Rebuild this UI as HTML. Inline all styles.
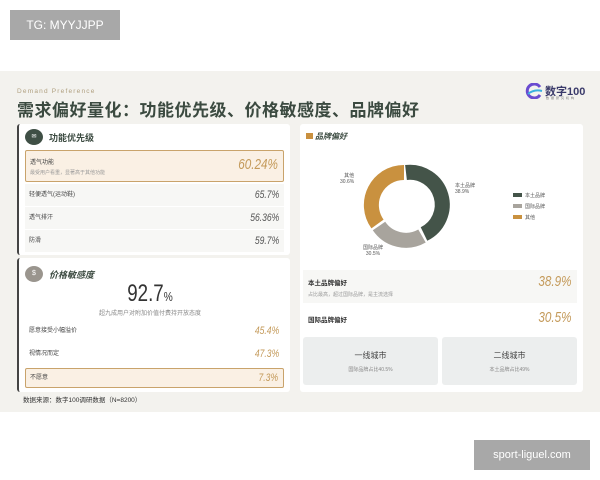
<!DOCTYPE html>
<html><head><meta charset="utf-8"><style>
*{margin:0;padding:0;box-sizing:border-box}
body{width:600px;height:480px;background:#fff;position:relative;overflow:hidden;font-family:"Liberation Sans","Noto Sans CJK SC",sans-serif;color:#333}
.a{position:absolute}
.bg{left:0;top:71px;width:600px;height:341px;background:#f3f2ee}
.card{background:#fff;border-radius:3px}
.row{position:absolute;left:25px;width:259px;height:22px;background:#f7f7f5;font-size:6px;color:#444;padding-left:4px;line-height:22px}
.row b{position:absolute;right:5px;top:0;font-weight:normal;font-style:italic;font-size:11px;color:#555;transform:scaleX(0.78);transform-origin:right center}
.gold{color:#c49a5a!important}
.hl{background:#faf0e4;border:1px solid #c9a36b;border-radius:2px}
.city{position:absolute;top:337px;width:135px;height:48px;background:#eceeee;border-radius:3px;text-align:center}
.num{transform:scaleX(0.78);transform-origin:right center}
</style></head><body>
<div class="a" style="left:10px;top:10px;width:110px;height:30px;background:#a8a8a8;color:#fff;font-size:12px;line-height:30px;text-align:center">TG: MYYJJPP</div>
<div class="a bg"></div>
<div class="a" style="left:17px;top:88px;font-size:6.5px;letter-spacing:1.2px;color:#b0a080">Demand Preference</div>
<div class="a" style="left:17px;top:96px;font-size:17px;font-weight:bold;color:#3b4a40;letter-spacing:0.5px">需求偏好量化：功能优先级、价格敏感度、品牌偏好</div>
<svg class="a" style="left:525px;top:83px" width="18" height="16"><path d="M15 4 A7 7 0 1 0 15 12" stroke="#6a4bd0" stroke-width="3" fill="none"/><path d="M3 11 Q9 6 17 8" stroke="#39b0e0" stroke-width="2" fill="none"/></svg>
<div class="a" style="left:545px;top:83px;font-size:11px;font-weight:bold;color:#3a3a6a">数字100</div>
<div class="a" style="left:546px;top:96px;font-size:3px;color:#777;letter-spacing:2px">数据研究机构</div>

<div class="a card" style="left:17px;top:124px;width:273px;height:131px;border-left:2px solid #444"></div>
<div class="a" style="left:25px;top:129px;width:18px;height:16px;border-radius:50%;background:#3f4f45;color:#fff;font-size:6px;text-align:center;line-height:16px">✉</div>
<div class="a" style="left:49px;top:131px;font-size:9px;font-weight:bold;color:#3b4a40">功能优先级</div>
<div class="row hl" style="top:150px;height:32px;line-height:normal;padding-top:6px">透气功能<div style="font-size:5px;color:#999;margin-top:3px">最受用户看重，显著高于其他功能</div><b class="gold" style="font-size:15px;top:5px">60.24%</b></div>
<div class="row" style="top:184px">轻便透气(运动鞋)<b>65.7%</b></div>
<div class="row" style="top:207px">透气排汗<b>56.36%</b></div>
<div class="row" style="top:230px">防滑<b>59.7%</b></div>

<div class="a card" style="left:17px;top:258px;width:273px;height:134px;border-left:2px solid #444"></div>
<div class="a" style="left:25px;top:266px;width:18px;height:16px;border-radius:50%;background:#9a958e;color:#fff;font-size:7px;text-align:center;line-height:16px">$</div>
<div class="a" style="left:49px;top:268px;font-size:9px;font-weight:bold;font-style:italic;color:#3b4a40">价格敏感度</div>
<div class="a" style="left:100px;top:280px;width:100px;text-align:center;font-size:24px;color:#333;transform:scaleX(0.78)">92.7<span style="font-size:13px">%</span></div>
<div class="a" style="left:50px;top:308px;width:200px;text-align:center;font-size:6px;color:#888">超九成用户对附加价值付费持开放态度</div>
<div class="row" style="top:320px;background:#fff">愿意接受小幅溢价<b class="gold">45.4%</b></div>
<div class="row" style="top:343px;background:#fff">视情况而定<b class="gold">47.3%</b></div>
<div class="row hl" style="top:368px;height:20px;line-height:18px">不愿意<b class="gold" style="line-height:18px">7.3%</b></div>
<div class="a" style="left:23px;top:394px;font-size:6.5px;color:#333">数据来源：数字100调研数据（N=8200）</div>

<div class="a card" style="left:300px;top:124px;width:283px;height:268px"></div>
<div class="a" style="left:306px;top:133px;width:7px;height:6px;background:#c9903f"></div>
<div class="a" style="left:315px;top:131px;font-size:8px;font-weight:bold;font-style:italic;color:#3b4a40">品牌偏好</div>
<svg class="a" style="left:355px;top:155px" width="110" height="110">
<g fill="none" stroke-width="15">
<path d="M51 17.5 A32.5 32.5 0 0 1 69 79" stroke="#445449"/>
<path d="M67 81 A32.5 32.5 0 0 1 24 71" stroke="#a8a49d"/>
<path d="M22.5 69 A32.5 32.5 0 0 1 49 17.5" stroke="#c9913f"/>
</g></svg>
<div class="a" style="left:455px;top:183px;font-size:5px;color:#555;line-height:6px">本土品牌<br>38.9%</div>
<div class="a" style="left:340px;top:173px;font-size:5px;color:#555;line-height:6px;text-align:right">其他<br>30.6%</div>
<div class="a" style="left:363px;top:245px;font-size:5px;color:#555;line-height:6px;text-align:center">国际品牌<br>30.5%</div>
<div class="a" style="left:513px;top:191px;font-size:5px;color:#555;line-height:11px">
<div><span style="display:inline-block;width:9px;height:4px;background:#445449;margin-right:3px"></span>本土品牌</div>
<div><span style="display:inline-block;width:9px;height:4px;background:#a8a49d;margin-right:3px"></span>国际品牌</div>
<div><span style="display:inline-block;width:9px;height:4px;background:#c9913f;margin-right:3px"></span>其他</div></div>
<div class="a" style="left:303px;top:270px;width:274px;height:33px;background:#f7f7f5;padding:7px 5px"><div style="font-size:6.5px;font-weight:bold;color:#333">本土品牌偏好</div><div style="font-size:5px;color:#999;margin-top:4px">占比最高，超过国际品牌，是主流选择</div><div class="a gold num" style="right:5px;top:3px;font-size:15px;font-style:italic">38.9%</div></div>
<div class="a" style="left:303px;top:304px;width:274px;height:30px;background:#fff;padding:10px 5px"><div style="font-size:6.5px;font-weight:bold;color:#333">国际品牌偏好</div><div class="a gold num" style="right:5px;top:5px;font-size:15px;font-style:italic">30.5%</div></div>
<div class="city" style="left:303px"><div style="font-size:8px;color:#444;margin-top:13px">一线城市</div><div style="font-size:5px;color:#888;margin-top:5px">国际品牌占比40.5%</div></div>
<div class="city" style="left:442px"><div style="font-size:8px;color:#444;margin-top:13px">二线城市</div><div style="font-size:5px;color:#888;margin-top:5px">本土品牌占比49%</div></div>

<div class="a" style="left:474px;top:440px;width:116px;height:30px;background:#a8a8a8;color:#fff;font-size:11px;line-height:30px;text-align:center">sport-liguel.com</div>
</body></html>
